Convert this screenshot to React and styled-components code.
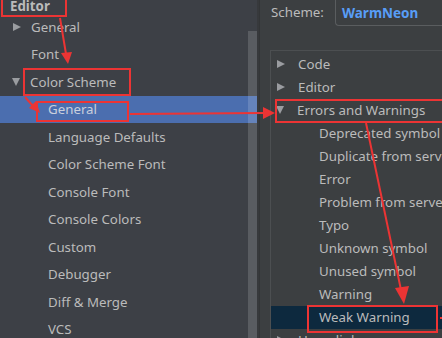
import React from "react";
import styled, { createGlobalStyle } from "styled-components";

const GlobalStyle = createGlobalStyle`
  html, body {
    margin: 0;
    padding: 0;
    background: #3c3f41;
  }
  body {
    font-family: "Noto Sans", "Open Sans", sans-serif;
    font-size: 13.3px;
    color: #bbbbbb;
  }
`;

const Screen = styled.div`
  position: relative;
  width: 442px;
  height: 338px;
  overflow: hidden;
  display: flex;
  background: #3c3f41;
`;

const LeftPanel = styled.div`
  position: relative;
  width: 257px;
  flex-shrink: 0;
  background: #3d4046;
`;

const Heading = styled.div`
  height: 13px;
  line-height: 13px;
  padding-left: 10px;
  font-weight: 700;
`;

const NavRow = styled.div`
  display: flex;
  align-items: center;
  height: 27.5px;
  padding-left: ${(p) => (p.$level === 2 ? 48 : 12)}px;
  background: ${(p) => (p.$selected ? "#4b6eaf" : "transparent")};
  color: ${(p) => (p.$selected ? "#c9cfdc" : "#bbbbbb")};
  white-space: nowrap;
`;

const Caret = styled.span`
  display: inline-block;
  width: 0;
  height: 0;
  margin-right: ${(p) => p.$gap}px;
  ${(p) =>
    p.$open
      ? `border-left: 4.5px solid transparent;
         border-right: 4.5px solid transparent;
         border-top: 8px solid #9a9ca0;`
      : `border-top: 4.5px solid transparent;
         border-bottom: 4.5px solid transparent;
         border-left: 8px solid #9a9ca0;
         margin-left: 1px;`}
`;

const Spacer = styled.span`
  display: inline-block;
  width: ${(p) => p.$w}px;
`;

const ScrollThumb = styled.div`
  position: absolute;
  right: 0;
  top: 31px;
  bottom: 0;
  width: 9px;
  background: rgba(255, 255, 255, 0.15);
`;

const Gutter = styled.div`
  width: 2px;
  flex-shrink: 0;
  background: #37393c;
  border-right: 1px solid #333537;
`;

const RightPanel = styled.div`
  flex: 1;
  padding-left: 10px;
  display: flex;
  flex-direction: column;
  min-width: 0;
`;

const SchemeRow = styled.div`
  display: flex;
  align-items: flex-start;
  height: 26px;
`;

const SchemeLabel = styled.div`
  width: 64px;
  padding-left: 1px;
  line-height: 24px;
  flex-shrink: 0;
`;

const Combo = styled.div`
  flex: 1;
  margin-top: -6px;
  height: 32px;
  border: 1px solid #5a5d5f;
  border-right: none;
  border-radius: 0 0 0 4px;
  padding: 6px 0 0 6px;
  box-sizing: border-box;
  line-height: 24px;
  color: #589df6;
  font-weight: 700;
  font-size: 13.5px;
`;

const Separator = styled.div`
  margin-top: 14px;
  height: 1px;
  background: #545759;
`;

const TreeBox = styled.div`
  margin-top: 10px;
  padding-top: 1.5px;
  flex: 1;
  border-top: 1px solid #4c4f51;
  border-left: 1px solid #4c4f51;
  background: #3c3f41;
`;

const TreeRow = styled.div`
  display: flex;
  align-items: center;
  height: 23px;
  padding-left: ${(p) => (p.$child ? 48 : 5)}px;
  background: ${(p) => (p.$selected ? "#0d293e" : "transparent")};
  white-space: nowrap;
`;

const Overlay = styled.svg`
  position: absolute;
  left: 0;
  top: 0;
  pointer-events: none;
`;

const leftItems = [
  { label: "General", level: 1, caret: "closed" },
  { label: "Font", level: 1 },
  { label: "Color Scheme", level: 1, caret: "open" },
  { label: "General", level: 2, selected: true },
  { label: "Language Defaults", level: 2 },
  { label: "Color Scheme Font", level: 2 },
  { label: "Console Font", level: 2 },
  { label: "Console Colors", level: 2 },
  { label: "Custom", level: 2 },
  { label: "Debugger", level: 2 },
  { label: "Diff & Merge", level: 2 },
  { label: "VCS", level: 2 },
];

const rightItems = [
  { label: "Code", caret: "closed" },
  { label: "Editor", caret: "closed" },
  { label: "Errors and Warnings", caret: "open" },
  { label: "Deprecated symbol", child: true },
  { label: "Duplicate from server", child: true },
  { label: "Error", child: true },
  { label: "Problem from server", child: true },
  { label: "Typo", child: true },
  { label: "Unknown symbol", child: true },
  { label: "Unused symbol", child: true },
  { label: "Warning", child: true },
  { label: "Weak Warning", child: true, selected: true },
  { label: "Hyperlinks", caret: "closed" },
];

function Annotations() {
  const red = "#ec3434";
  return (
    <Overlay width="442" height="338" viewBox="0 0 442 338">
      <g fill="none" stroke={red} strokeWidth="2">
        <rect x="2" y="-3" width="64" height="19" />
        <rect x="24" y="69" width="106" height="26" />
        <rect x="37" y="102" width="91" height="19" />
        <rect x="276" y="100" width="170" height="22" />
        <rect x="308" y="306" width="129" height="26" />
        <line x1="60" y1="18" x2="66" y2="54" />
        <line x1="25" y1="97" x2="33" y2="106" />
        <line x1="130" y1="114" x2="264" y2="113" />
        <line x1="366" y1="123" x2="401" y2="290" />
        <line x1="440" y1="318" x2="446" y2="318" />
      </g>
      <g fill={red}>
        <polygon points="61,53 72,52 68,64" />
        <polygon points="29,108 36,101 40,113" />
        <polygon points="263,107 275,113 263,119" />
        <polygon points="395,288 409,286 404,304" />
      </g>
    </Overlay>
  );
}

export default function App() {
  return (
    <>
      <GlobalStyle />
      <Screen>
        <LeftPanel>
          <Heading>Editor</Heading>
          {leftItems.map((item, i) => (
            <NavRow key={i} $level={item.level} $selected={item.selected}>
              {item.caret ? (
                <Caret $open={item.caret === "open"} $gap={10} />
              ) : item.level === 1 ? (
                <Spacer $w={19} />
              ) : null}
              {item.label}
            </NavRow>
          ))}
          <ScrollThumb />
        </LeftPanel>
        <Gutter />
        <RightPanel>
          <SchemeRow>
            <SchemeLabel>Scheme:</SchemeLabel>
            <Combo>WarmNeon</Combo>
          </SchemeRow>
          <Separator />
          <TreeBox>
            {rightItems.map((item, i) => (
              <TreeRow key={i} $child={item.child} $selected={item.selected}>
                {item.caret && (
                  <Caret $open={item.caret === "open"} $gap={13} />
                )}
                {item.label}
              </TreeRow>
            ))}
          </TreeBox>
        </RightPanel>
        <Annotations />
      </Screen>
    </>
  );
}
